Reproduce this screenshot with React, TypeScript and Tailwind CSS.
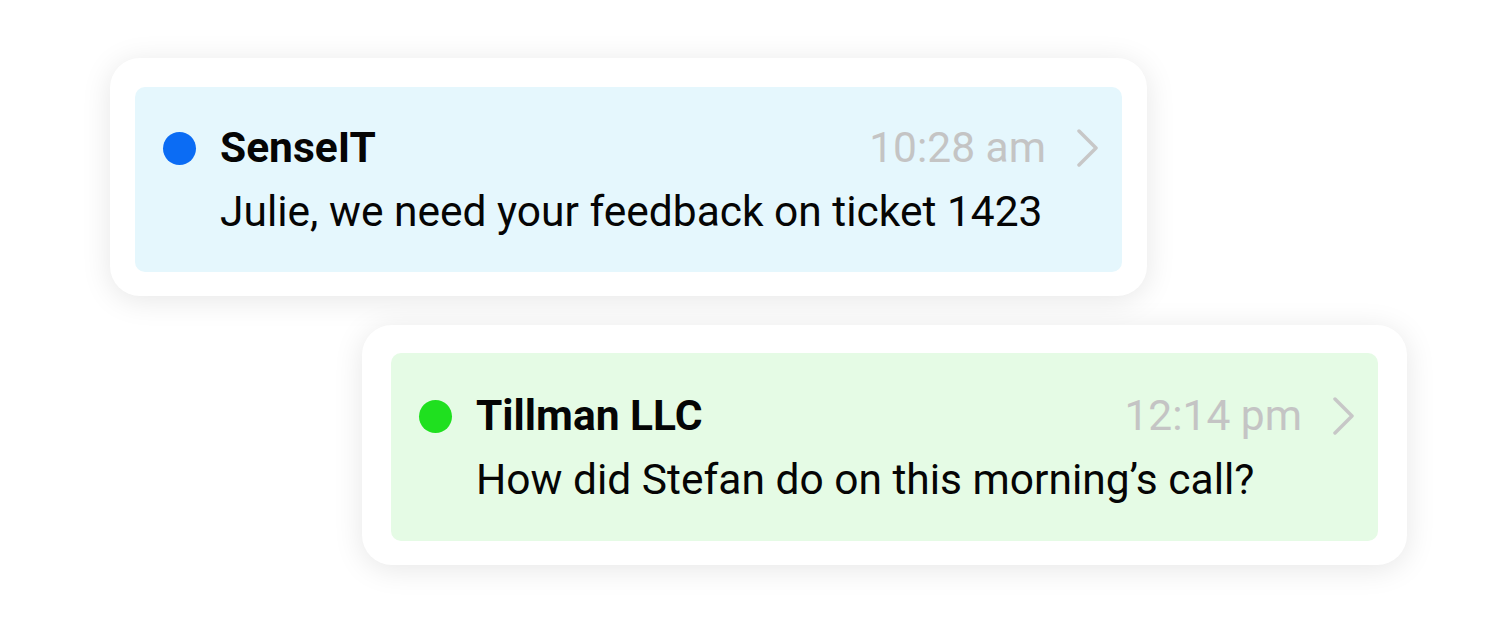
const messages = [
  {
    id: 1,
    name: "SenseIT",
    time: "10:28 am",
    text: "Julie, we need your feedback on ticket 1423",
    dot: "bg-[#0b6cf4]",
    bg: "bg-[#e5f7fd]",
    outer: "ml-[110px] pt-[29px] px-[25px] pb-[24px]",
    inner: "pt-[29px] pb-[28px]",
  },
  {
    id: 2,
    name: "Tillman LLC",
    time: "12:14 pm",
    text: "How did Stefan do on this morning\u2019s call?",
    dot: "bg-[#1fe01f]",
    bg: "bg-[#e5fbe5]",
    outer: "ml-[362px] pt-[28px] px-[29px] pb-[24px]",
    inner: "pt-[31px] pb-[29px]",
  },
];

function Chevron() {
  return (
    <svg width="24" height="38" viewBox="0 0 24 38" fill="none" className="shrink-0">
      <polyline
        points="3,2 20,19 3,36"
        stroke="#c7c7c7"
        strokeWidth="3.5"
        strokeLinecap="round"
        strokeLinejoin="round"
      />
    </svg>
  );
}

export default function App() {
  return (
    <main className="w-[1510px] h-[624px] bg-white font-['Roboto',sans-serif] pt-[58px] flex flex-col gap-[29px]">
      {messages.map((m) => (
        <div
          key={m.id}
          className={`${m.outer} w-fit bg-white rounded-[30px] shadow-[0_4px_30px_rgba(0,0,0,0.1)]`}
        >
          <div className={`${m.bg} ${m.inner} w-[987px] rounded-[10px] pl-[28px] pr-[22px]`}>
            <div className="flex items-center h-[64px]">
              <span className={`${m.dot} w-[33px] h-[33px] rounded-full shrink-0`} />
              <span className="ml-[24px] text-[42.5px] leading-[64px] font-bold text-[#050505]">{m.name}</span>
              <span className="ml-auto text-[42.5px] leading-[64px] text-[#c4c4c4]">{m.time}</span>
              <span className="ml-[30px]">
                <Chevron />
              </span>
            </div>
            <p className="pl-[57px] text-[42.5px] leading-[64px] text-[#050505]">{m.text}</p>
          </div>
        </div>
      ))}
    </main>
  );
}
